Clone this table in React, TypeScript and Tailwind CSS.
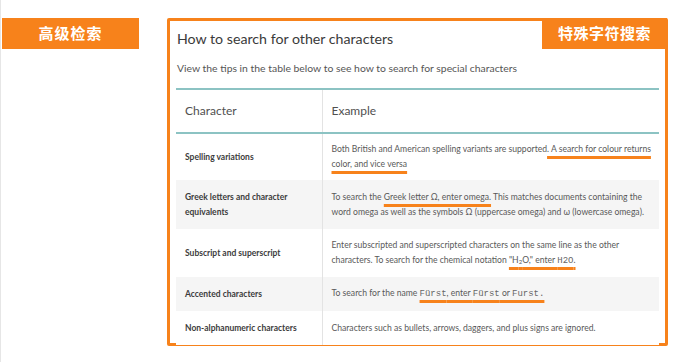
const orange = "bg-[#f7821b]";

const mark =
  "underline decoration-[#f7821b] decoration-[3px] underline-offset-[4px] [text-decoration-skip-ink:none]";

function Mono({ children }: { children: React.ReactNode }) {
  return (
    <span className="font-['Liberation_Mono',monospace] text-[9px] text-[#666]">
      {children}
    </span>
  );
}

interface Row {
  name: React.ReactNode;
  example: React.ReactNode;
  height: string;
  shaded?: boolean;
}

const rows: Row[] = [
  {
    name: "Spelling variations",
    height: "h-[47px]",
    example: (
      <>
        Both British and American spelling variants are supported
        <span className={mark}>. A search for colour returns color, and vice versa</span>
      </>
    ),
  },
  {
    name: (
      <>
        Greek letters and character
        <br />
        equivalents
      </>
    ),
    height: "h-[49px]",
    shaded: true,
    example: (
      <>
        To search the <span className={mark}>Greek letter Ω, enter omega.</span> This matches
        documents containing the word omega as well as the symbols Ω (uppercase omega) and ω
        (lowercase omega).
      </>
    ),
  },
  {
    name: "Subscript and superscript",
    height: "h-[48px]",
    example: (
      <>
        Enter subscripted and superscripted characters on the same line as the other
        characters. To search for the chemical notation{" "}
        <span className={mark}>
          "H<sub className="text-[6px]">2</sub>O," enter <Mono>H2O</Mono>.
        </span>
      </>
    ),
  },
  {
    name: "Accented characters",
    height: "h-[34px]",
    shaded: true,
    example: (
      <>
        To search for the name{" "}
        <span className={mark}>
          <Mono>Fürst</Mono>, enter <Mono>Fürst</Mono> or <Mono>Furst.</Mono>
        </span>
      </>
    ),
  },
  {
    name: "Non-alphanumeric characters",
    height: "h-[34px]",
    example: "Characters such as bullets, arrows, daggers, and plus signs are ignored.",
  },
];

export default function App() {
  return (
    <div className="w-[692px] h-[362px] bg-white border-l border-[#e6e6e6] font-['Lato','Noto_Sans_CJK_SC',sans-serif] flex items-start pt-[18px] pl-[1px]">
      <div
        className={`${orange} w-[137px] h-[31px] flex items-center justify-center text-white text-[15px] font-bold tracking-[1px] font-['Noto_Sans_CJK_SC',sans-serif]`}
      >
        高级检索
      </div>

      <div className="relative ml-[28px] w-[501px] h-[328px] border-[3px] border-[#f7821b] rounded-[2px] px-[6px] pt-[8px]">
        <div
          className={`${orange} absolute top-[-3px] right-[-2px] w-[125px] h-[31px] flex items-center justify-center text-white text-[15px] font-bold tracking-[0.5px] font-['Noto_Sans_CJK_SC',sans-serif]`}
        >
          特殊字符搜索
        </div>

        <h2 className="pl-[1px] text-[14.2px] leading-[20px] text-[#3a3a3a]">
          How to search for other characters
        </h2>
        <p className="pl-[1px] mt-[12px] text-[10.4px] leading-[14px] text-[#555]">
          View the tips in the table below to see how to search for special characters
        </p>

        <table className="mt-[13px] w-[483px] table-fixed border-collapse border-t-2 border-[#8cc3c3]">
          <colgroup>
            <col className="w-[146px]" />
            <col />
          </colgroup>
          <thead>
            <tr className="h-[44px] border-b-2 border-[#8cc3c3]">
              <th className="text-left font-normal text-[12px] text-[#505050] pl-[9px] border-r border-[#e3e3e3]">
                Character
              </th>
              <th className="text-left font-normal text-[12px] text-[#505050] pl-[9px]">
                Example
              </th>
            </tr>
          </thead>
          <tbody>
            {rows.map((r, i) => (
              <tr key={i} className={`${r.height} ${r.shaded ? "bg-[#f5f5f5]" : "bg-white"}`}>
                <td className="pl-[9px] pr-[6px] text-[8.5px] leading-[15px] font-bold text-[#3c3c3c] border-r border-[#e3e3e3] align-middle">
                  {r.name}
                </td>
                <td className="pl-[9px] pr-[8px] text-[8.6px] leading-[15px] text-[#595959] align-middle">
                  {r.example}
                </td>
              </tr>
            ))}
          </tbody>
        </table>
      </div>
    </div>
  );
}
